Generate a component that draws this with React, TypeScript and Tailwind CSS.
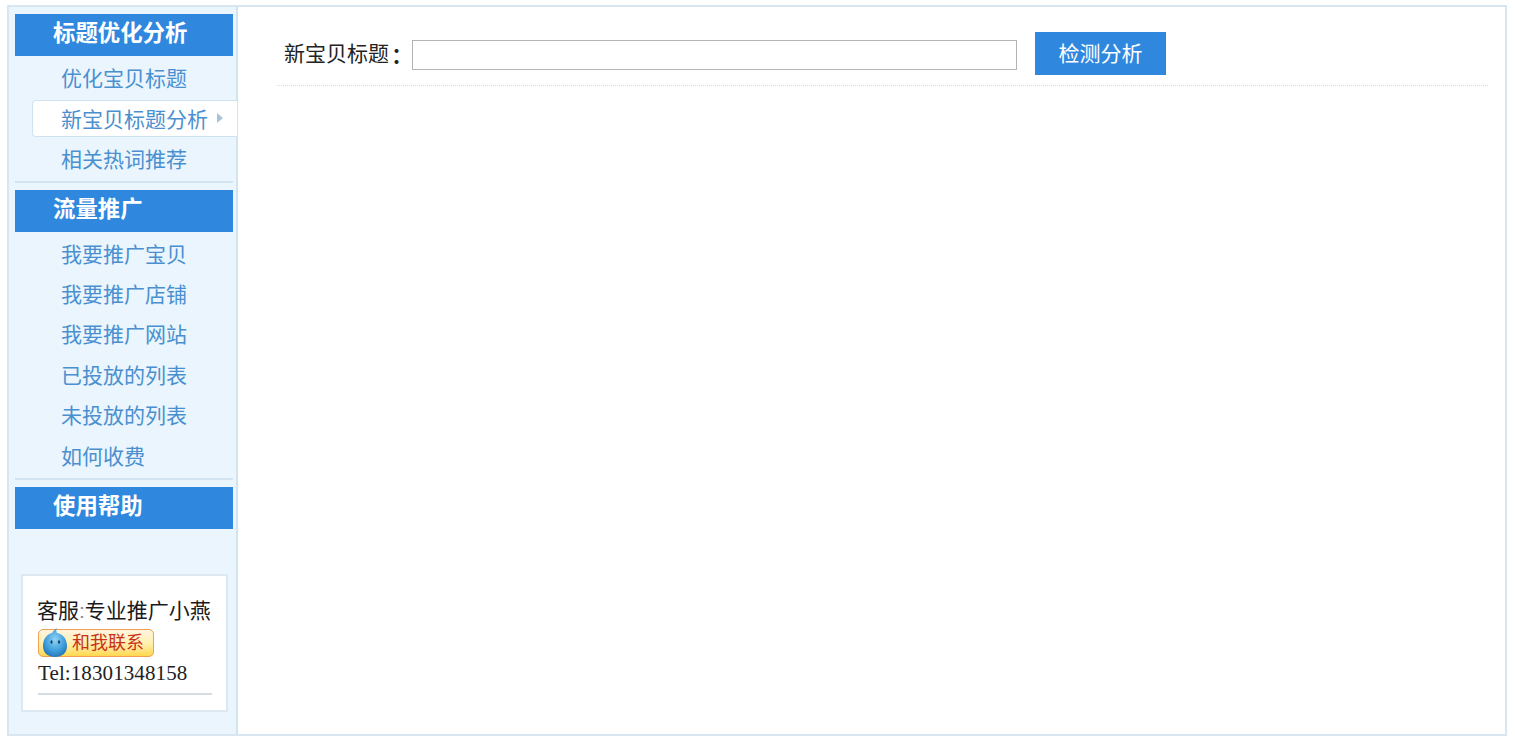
const cjk = "font-['Liberation_Sans','Noto_Sans_CJK_SC',sans-serif]";

function MenuHeader({ title }: { title: string }) {
  return (
    <div className="h-[42px] bg-[#2f88de] text-white flex items-center pl-[38px] text-[22.4px] leading-[38px] font-bold">
      <span className="-translate-y-[1px]">{title}</span>
    </div>
  );
}

function MenuItem({ label, active }: { label: string; active?: boolean }) {
  if (active) {
    return (
      <div className="h-[40.4px] flex items-start">
        <div className="h-[37px] mt-[0.5px] ml-[17px] -mr-[4px] flex-1 flex items-center bg-white border border-r-0 border-[#cfe2f0] rounded-l-[4px] pl-[28px] text-[21px] text-[#4a90d0] relative z-10">
          <span className="translate-y-[1px]">{label}</span>
          <span className="ml-[9px] w-0 h-0 border-y-[5px] border-y-transparent border-l-[6px] border-l-[#a9c4d8]" />
        </div>
      </div>
    );
  }
  return (
    <div className="h-[40.4px] flex items-center pl-[46px] text-[21px] text-[#4a90d0]">
      {label}
    </div>
  );
}

function QQButton() {
  return (
    <div className="w-[116px] h-[28px] rounded-[5px] border border-[#f0a050] bg-gradient-to-b from-[#fff4e0] via-[#fff0b0] to-[#ffd84a] flex items-center relative">
      <svg className="absolute left-[1px] top-[-3px]" width="30" height="31" viewBox="0 0 30 31">
        <defs>
          <radialGradient id="qq" cx="50%" cy="40%" r="60%">
            <stop offset="0%" stopColor="#8fd4f5" />
            <stop offset="70%" stopColor="#3a9ada" />
            <stop offset="100%" stopColor="#2878b8" />
          </radialGradient>
        </defs>
        <path d="M15 30c-7 0-12-4-12-11 0-7 4-12 9-13 1-2 3-4 5-5-1 2-1 3 0 5 6 1 10 6 10 13 0 7-5 11-12 11z" fill="url(#qq)" />
        <ellipse cx="11.5" cy="15" rx="1" ry="1.8" fill="#12365a" />
        <ellipse cx="19" cy="15" rx="1" ry="1.8" fill="#12365a" />
      </svg>
      <span className="ml-[33px] text-[18px] leading-none text-[#c8321a]">和我联系</span>
    </div>
  );
}

export default function App() {
  return (
    <div className={`${cjk} w-[1515px] h-[742px] bg-white overflow-hidden pt-[5px] pl-[7px]`}>
      <div className="w-[1500px] h-[731px] flex border-2 border-[#d8e6f1]">
        <aside className="w-[229px] shrink-0 bg-[#eaf5fd] border-r-2 border-[#d3e4f1] pt-[7px] pl-[6px] pr-[3px]">
          <MenuHeader title="标题优化分析" />
          <div className="pt-[3px] pb-[1px] border-b-2 border-[#d3e4f1]">
            <MenuItem label="优化宝贝标题" />
            <MenuItem label="新宝贝标题分析" active />
            <MenuItem label="相关热词推荐" />
          </div>
          <div className="h-[7px]" />
          <MenuHeader title="流量推广" />
          <div className="pt-[2px] pb-[1px] border-b-2 border-[#d3e4f1]">
            <MenuItem label="我要推广宝贝" />
            <MenuItem label="我要推广店铺" />
            <MenuItem label="我要推广网站" />
            <MenuItem label="已投放的列表" />
            <MenuItem label="未投放的列表" />
            <MenuItem label="如何收费" />
          </div>
          <div className="h-[7px]" />
          <MenuHeader title="使用帮助" />
          <div className="mt-[45px] ml-[6px] w-[207px] h-[138px] bg-white border-2 border-[#dde9f2] px-[14px] pt-[23px]">
            <div className="w-[175px] overflow-hidden whitespace-nowrap text-[21px] leading-[24px] text-[#1a1a1a]">
              客服<span className="text-[#888]">:</span>专业推广小燕
            </div>
            <div className="mt-[6px] ml-[1px]">
              <QQButton />
            </div>
            <div className="mt-[3px] ml-[1px] font-['Liberation_Serif',serif] text-[21px] tracking-[0.1px] leading-[26px] text-[#222]">
              Tel:18301348158
            </div>
            <div className="mt-[7px] ml-[1px] w-[174px] border-t-2 border-[#d4dde4]" />
          </div>
        </aside>
        <main className="flex-1 pt-[25px] pl-[39px] pr-[17px]">
          <div className="h-[54px] border-b border-dotted border-[#c4e0f3] flex items-start pl-[7px]">
            <span className="text-[21px] leading-[44px] text-[#222] w-[128px] shrink-0">
              新宝贝标题<span className="inline-block translate-y-[3px] font-['Noto_Sans_CJK_TC',sans-serif] font-bold leading-none -ml-[3px]">：</span>
            </span>
            <input
              type="text"
              className="mt-[8px] w-[605px] h-[30px] border-[1.5px] border-[#b4b4b4] bg-white"
            />
            <button className="ml-[18px] w-[131px] h-[43px] bg-[#2f88de] text-white text-[21px]">
              检测分析
            </button>
          </div>
        </main>
      </div>
    </div>
  );
}
